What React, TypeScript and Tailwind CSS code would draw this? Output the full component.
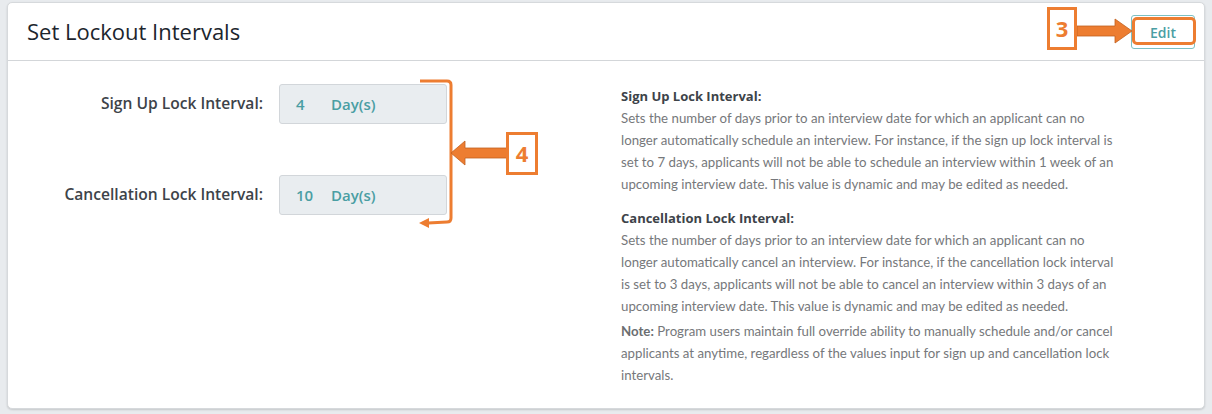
import React from "react";

const ORANGE = "#ed7d31";

export default function App() {
  return (
    <div className="w-[1212px] h-[414px] bg-[#e8ebee] pt-[2px] px-[7px] pb-[4px]" style={{ fontFamily: "'Open Sans', Lato, sans-serif" }}>
      <div className="relative bg-white border border-[#d6d9dc] rounded-[5px] shadow-[0_1px_2px_rgba(0,0,0,0.15)] h-[407px]">
        {/* Header */}
        <div className="h-[58px] border-b border-[#d3d6d9] flex items-center justify-between pl-[19px] pr-[9px]">
          <h1 className="text-[22px] text-[#1c252d]">Set Lockout Intervals</h1>
          <button className="w-[64px] h-[34px] mt-[1px] border border-[#7cc0c3] rounded-[3px] text-[14px] font-semibold text-[#4a9ea3] flex items-center justify-center">
            Edit
          </button>
        </div>

        {/* Body */}
        <div className="flex">
          <div className="w-[613px] pt-[23px]">
            <div className="flex items-center">
              <div className="w-[255px] text-right text-[15.6px] font-semibold text-[#3d4349]">Sign Up Lock Interval:</div>
              <div className="ml-[16px] w-[168px] h-[40px] bg-[#e9edf0] border border-[#d2d6da] rounded-[3px] flex items-center pl-[16px] text-[15px] font-semibold text-[#4a9ea3]">
                <span className="w-[35px]">4</span>
                <span>Day(s)</span>
              </div>
            </div>
            <div className="flex items-center mt-[51px]">
              <div className="w-[255px] text-right text-[15.6px] font-semibold text-[#3d4349]">Cancellation Lock Interval:</div>
              <div className="ml-[16px] w-[168px] h-[40px] bg-[#e9edf0] border border-[#d2d6da] rounded-[3px] flex items-center pl-[16px] text-[15px] font-semibold text-[#4a9ea3]">
                <span className="w-[35px]">10</span>
                <span>Day(s)</span>
              </div>
            </div>
          </div>

          <div className="flex-1 pt-[24px] pr-[20px] text-[13.25px] leading-[22px] text-[#76787b]" style={{ fontFamily: "Lato, 'Open Sans', sans-serif" }}>
            <div className="font-bold text-[13px] text-[#3d4349]" style={{ fontFamily: "'Open Sans', sans-serif" }}>Sign Up Lock Interval:</div>
            <p>
              Sets the number of days prior to an interview date for which an applicant can no<br />
              longer automatically schedule an interview. For instance, if the sign up lock interval is<br />
              set to 7 days, applicants will not be able to schedule an interview within 1 week of an<br />
              upcoming interview date. This value is dynamic and may be edited as needed.
            </p>
            <div className="font-bold text-[13px] text-[#3d4349] mt-[12px]" style={{ fontFamily: "'Open Sans', sans-serif" }}>Cancellation Lock Interval:</div>
            <p>
              Sets the number of days prior to an interview date for which an applicant can no<br />
              longer automatically cancel an interview. For instance, if the cancellation lock interval<br />
              is set to 3 days, applicants will not be able to cancel an interview within 3 days of an<br />
              upcoming interview date. This value is dynamic and may be edited as needed.
            </p>
            <p className="mt-[3px]">
              <span className="font-bold text-[#6b6e71]">Note:</span> Program users maintain full override ability to manually schedule and/or cancel<br />
              applicants at anytime, regardless of the values input for sign up and cancellation lock<br />
              intervals.
            </p>
          </div>
        </div>

        {/* Annotation 3 */}
        <div className="absolute left-[1039px] top-[4px] w-[30px] h-[43px] border-[3px] border-[#ed7d31] bg-white flex items-center justify-center text-[22px] font-bold text-[#ed7d31]">
          3
        </div>
        <svg className="absolute left-[1069px] top-[13px]" width="56" height="30" viewBox="0 0 56 30">
          <polygon points="0,10 38,10 38,3 55,15 38,27 38,20 0,20" fill={ORANGE} stroke="#c2611f" strokeWidth="0.8" />
        </svg>
        <div className="absolute left-[1124px] top-[14px] w-[64px] h-[28px] border-[3px] border-[#ed7d31] rounded-[5px]" />

        {/* Bracket + annotation 4 */}
        <svg className="absolute left-[400px] top-[75px]" width="60" height="160" viewBox="0 0 60 160">
          <path d="M12 3 L39 3 Q43 3 43 7 L43 140 Q43 144 39 144 L20 145" fill="none" stroke={ORANGE} strokeWidth="3" />
          <polygon points="11,145 21,140 21,150" fill={ORANGE} />
        </svg>
        <svg className="absolute left-[441px] top-[135px]" width="60" height="30" viewBox="0 0 60 30">
          <polygon points="2,15 16,3 16,10 58,10 58,20 16,20 16,27" fill={ORANGE} stroke="#c2611f" strokeWidth="0.8" />
        </svg>
        <div className="absolute left-[498px] top-[129px] w-[32px] h-[43px] border-[3px] border-[#ed7d31] bg-white flex items-center justify-center text-[22px] font-bold text-[#ed7d31]">
          4
        </div>
      </div>
    </div>
  );
}
